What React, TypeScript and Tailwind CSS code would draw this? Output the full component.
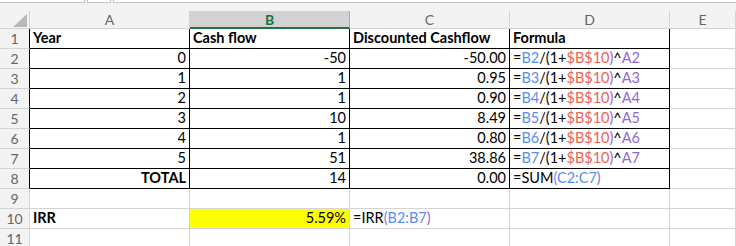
import React from "react";

type Seg = { t: string; c?: string };

const BLUE = "#5b8cf0";
const RED = "#ee5f58";
const PURPLE = "#9068d6";
const PAREN = "#7f7fd8";

const cols = ["A", "B", "C", "D", "E"];

type Cell = { v?: React.ReactNode; align?: "l" | "r"; bold?: boolean; bg?: string };

const f = (n: number): Seg[] => [
  { t: "=" },
  { t: `B${n}`, c: BLUE },
  { t: "/(1+" },
  { t: "$B$10", c: RED },
  { t: ")", c: PURPLE },
  { t: "^" },
  { t: `A${n}`, c: PURPLE },
];

const Formula = ({ segs }: { segs: Seg[] }) => (
  <span>
    {segs.map((s, i) => (
      <span key={i} style={s.c ? { color: s.c } : undefined}>
        {s.t}
      </span>
    ))}
  </span>
);

const rows: Cell[][] = [
  [
    { v: "Year", bold: true },
    { v: "Cash flow", bold: true },
    { v: "Discounted Cashflow", bold: true },
    { v: "Formula", bold: true },
    {},
  ],
  [{ v: "0", align: "r" }, { v: "-50", align: "r" }, { v: "-50.00", align: "r" }, { v: <Formula segs={f(2)} /> }, {}],
  [{ v: "1", align: "r" }, { v: "1", align: "r" }, { v: "0.95", align: "r" }, { v: <Formula segs={f(3)} /> }, {}],
  [{ v: "2", align: "r" }, { v: "1", align: "r" }, { v: "0.90", align: "r" }, { v: <Formula segs={f(4)} /> }, {}],
  [{ v: "3", align: "r" }, { v: "10", align: "r" }, { v: "8.49", align: "r" }, { v: <Formula segs={f(5)} /> }, {}],
  [{ v: "4", align: "r" }, { v: "1", align: "r" }, { v: "0.80", align: "r" }, { v: <Formula segs={f(6)} /> }, {}],
  [{ v: "5", align: "r" }, { v: "51", align: "r" }, { v: "38.86", align: "r" }, { v: <Formula segs={f(7)} /> }, {}],
  [
    { v: "TOTAL", align: "r", bold: true },
    { v: "14", align: "r" },
    { v: "0.00", align: "r" },
    {
      v: (
        <Formula
          segs={[{ t: "=SUM" }, { t: "(", c: PAREN }, { t: "C2:C7", c: BLUE }, { t: ")", c: PURPLE }]}
        />
      ),
    },
    {},
  ],
  [{}, {}, {}, {}, {}],
  [
    { v: "IRR", bold: true },
    { v: "5.59%", align: "r", bg: "#ffff00" },
    {
      v: (
        <Formula
          segs={[{ t: "=IRR" }, { t: "(", c: PAREN }, { t: "B2:B7", c: BLUE }, { t: ")", c: PURPLE }]}
        />
      ),
    },
    {},
    {},
  ],
  [{}, {}, {}, {}, {}],
];

export default function App() {
  return (
    <div
      className="w-[736px] h-[246px] overflow-hidden bg-[#f3f3f3] text-[14.5px] text-black"
      style={{ fontFamily: "Lato, 'Liberation Sans', sans-serif" }}
    >
      {/* formula bar remnants */}
      <div className="flex h-[3px] gap-[2px]">
        <div className="w-[85px] bg-white border-b border-r border-[#c6c6c6]" />
        <div className="w-[24px] bg-white border-b border-x border-[#c6c6c6]" />
        <div className="flex-1 bg-white border-b border-l border-[#c6c6c6]" />
      </div>

      <div className="mt-[8px] grid grid-cols-[30px_160px_160px_160px_160px_1fr] grid-rows-[18px_repeat(11,20px)] bg-white">
        {/* corner select-all */}
        <div className="relative bg-[#f3f3f3] border-r border-b border-[#d4d4d4]">
          <svg className="absolute left-[13px] top-[3px]" width="14" height="13" viewBox="0 0 14 13">
            <polygon points="14,0 14,13 0,13" fill="#b8b8b8" />
          </svg>
        </div>
        {cols.map((c) =>
          c === "B" ? (
            <div
              key={c}
              className="flex items-center justify-center bg-[#d2d2d2] border-r border-[#ababab] border-b-2 border-b-[#217346] font-bold text-[#217346] text-[14px]"
            >
              {c}
            </div>
          ) : (
            <div
              key={c}
              className="flex items-center justify-center bg-[#f3f3f3] border-r border-b border-[#d4d4d4] text-[#666] text-[14px]"
            >
              {c}
            </div>
          ),
        )}

        {rows.map((r, ri) => {
          const inTable = ri < 8;
          return (
            <React.Fragment key={ri}>
              <div
                className={`flex items-center justify-center bg-[#f3f3f3] border-b border-[#d4d4d4] text-[#666] text-[14px] ${
                  inTable ? "border-r border-r-black" : "border-r border-r-[#d4d4d4]"
                }`}
              >
                {ri + 1}
              </div>
              {r.map((cell, ci) => {
                const black = inTable && ci < 4;
                const blackBottom = black || (ri === 7 && ci < 4);
                return (
                  <div
                    key={ci}
                    className={`flex items-end pb-[1px] px-[3px] whitespace-nowrap overflow-visible leading-[18px] border-r border-b ${
                      black ? "border-r-black" : "border-r-[#d4d4d4]"
                    } ${blackBottom ? "border-b-black" : "border-b-[#d4d4d4]"} ${
                      cell.align === "r" ? "justify-end" : "justify-start"
                    } ${cell.bold ? "font-bold" : ""}`}
                    style={cell.bg ? { backgroundColor: cell.bg } : undefined}
                  >
                    {cell.v}
                  </div>
                );
              })}
            </React.Fragment>
          );
        })}
      </div>
    </div>
  );
}
